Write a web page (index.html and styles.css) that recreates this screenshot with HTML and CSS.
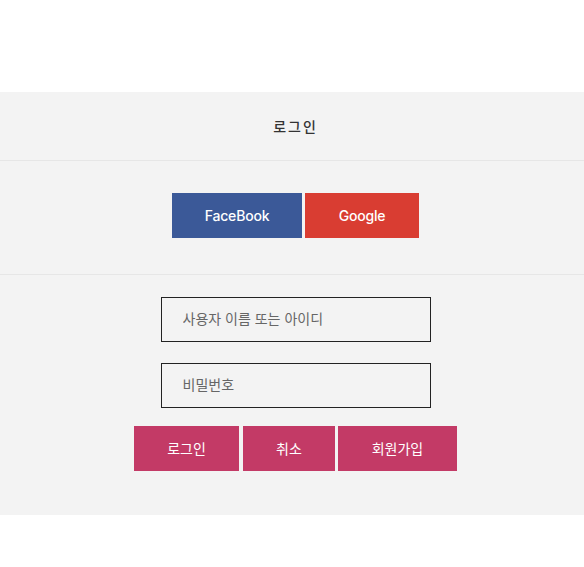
FILE: index.html
```html
<!DOCTYPE html>
<html lang="ko">
<head>
<meta charset="utf-8">
<title>로그인</title>
<link rel="stylesheet" href="styles.css">
</head>
<body>
<div class="spacer"></div>
<section class="login">
  <div class="login-head"><h2 class="title">로그인</h2></div>
  <div class="social">
    <a class="sbtn fb" href="#">FaceBook</a><a class="sbtn gg" href="#">Google</a>
  </div>
  <form class="form">
    <input class="field" type="text" placeholder="사용자 이름 또는 아이디">
    <input class="field" type="password" placeholder="비밀번호">
    <div class="actions">
      <button class="act a1" type="button">로그인</button><button class="act a2" type="button">취소</button><button class="act a3" type="button">회원가입</button>
    </div>
  </form>
</section>
</body>
</html>
```
FILE: styles.css
```css
html, body { margin: 0; padding: 0; background: #fff; }
body { font-family: "Noto Sans CJK KR", "Noto Sans", sans-serif; }
.spacer { height: 92px; }
.login { background: #f3f3f3; padding-left: 7px; }
.login-head {
  height: 68px;
  display: flex; align-items: center; justify-content: center;
  border-bottom: 1px solid #e6e6e6;
  margin-left: -7px; padding-left: 7px;
}
.title {
  margin: 0; font-size: 14px; font-weight: 500; color: #333;
  letter-spacing: 2px; line-height: 1;
}
.social {
  display: flex; justify-content: center; gap: 3px;
  padding: 32px 0 36px;
  border-bottom: 1px solid #e6e6e6;
  margin-left: -7px; padding-left: 7px;
}
.sbtn {
  display: flex; align-items: center; justify-content: center;
  height: 45px; color: #fff; text-decoration: none;
  font-family: "Inter", "Open Sans", sans-serif; font-size: 14px; font-weight: 500; letter-spacing: -0.2px;
}
.fb { width: 130px; background: #3b5998; }
.gg { width: 114px; background: #d93d32; }
.form {
  display: flex; flex-direction: column; align-items: center;
  padding: 22px 0 44px; margin: 0;
}
.field {
  box-sizing: border-box; width: 270px; height: 45px;
  border: 1px solid #222; background: #f3f3f3;
  padding: 0 21px 3px; margin: 0 0 21px;
  font-family: "Noto Sans CJK KR", sans-serif; font-size: 14px; color: #333;
  outline: none;
}
.field:last-of-type { margin-bottom: 18px; }
.field::placeholder { color: #666; }
.actions { display: flex; }
.act {
  height: 45px; border: 0; background: #c33a66; color: #fff;
  font-family: "Noto Sans CJK KR", sans-serif; font-size: 14px; font-weight: 400;
  padding: 0 0 2px; margin: 0;
}
.a1 { width: 105px; margin-right: 4px; }
.a2 { width: 92px; margin-right: 3px; }
.a3 { width: 119px; }
```
